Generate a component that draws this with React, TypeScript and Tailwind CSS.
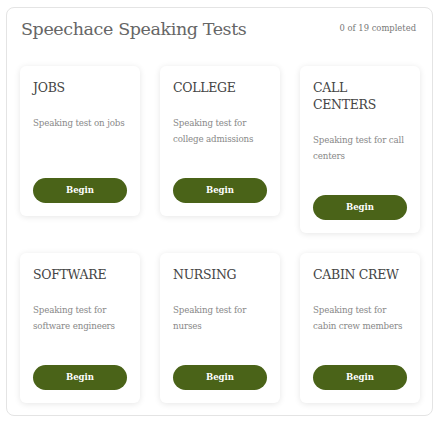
import React from 'react';

const tests = [
  { title: 'JOBS', desc: 'Speaking test on jobs' },
  { title: 'COLLEGE', desc: 'Speaking test for college admissions' },
  { title: 'CALL CENTERS', desc: 'Speaking test for call centers' },
  { title: 'SOFTWARE', desc: 'Speaking test for software engineers' },
  { title: 'NURSING', desc: 'Speaking test for nurses' },
  { title: 'CABIN CREW', desc: 'Speaking test for cabin crew members' },
];

export default function App() {
  return (
    <div className="w-[441px] h-[427px] bg-white pt-[7px] pl-[6px]" style={{ fontFamily: '"DejaVu Serif", "Liberation Serif", serif' }}>
      <div className="w-[427px] h-[409px] rounded-lg border border-[#e4e4e4] px-[13px] pt-[7px]">
        <div className="flex items-start justify-between">
          <h1 className="text-[17.5px] leading-[28px] font-light text-[#666] tracking-[-0.4px] pl-px">
            Speechace Speaking Tests
          </h1>
          <span className="text-[8.4px] leading-[12px] mt-[7px] mr-[3px] text-[#777]">0 of 19 completed</span>
        </div>

        <div className="grid grid-cols-[120px_120px_120px] gap-5 items-start mt-[23px]">
          {tests.map((t) => (
            <div key={t.title} className="w-[120px] rounded-md bg-white px-[13px] pt-[13px] pb-[13px] shadow-[0_1px_6px_rgba(0,0,0,0.1)]">
              <h3 className="text-[12.5px] leading-[17px] text-[#444] tracking-[-0.3px]">{t.title}</h3>
              <p className="mt-[19px] h-[61px] text-[8.7px] leading-[16px] text-[#888] tracking-[-0.15px]">{t.desc}</p>
              <button className="w-[94px] h-[25px] rounded-full bg-[#4a6318] text-white text-[8.5px] font-bold">
                Begin
              </button>
            </div>
          ))}
        </div>
      </div>
    </div>
  );
}
